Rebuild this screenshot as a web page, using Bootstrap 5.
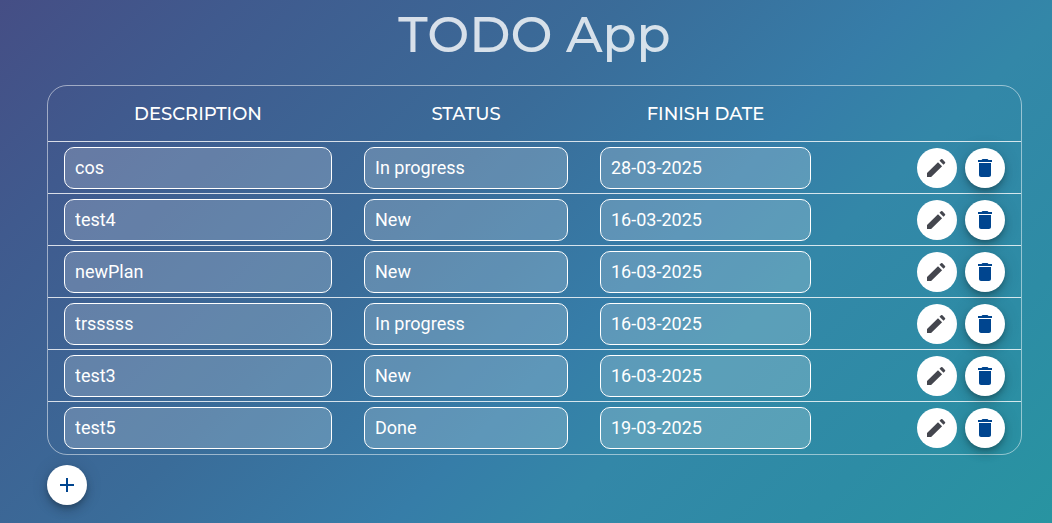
<!DOCTYPE html>
<html lang="en">
<head>
<meta charset="utf-8">
<meta name="viewport" content="width=device-width, initial-scale=1">
<title>TODO App</title>
<link href="https://cdn.jsdelivr.net/npm/bootstrap@5.3.0/dist/css/bootstrap.min.css" rel="stylesheet">
<style>
body { min-height: 100vh; font-family: Roboto, "Liberation Sans", sans-serif; background: linear-gradient(135deg, #454e85 0%, #405a8e 15%, #3a6c99 40%, #367da8 58%, #3387a8 68%, #2d8ca5 84%, #2894a1 100%) no-repeat; }
.page { padding: 8px 30px 18px 47px; }
.app-title { font: 500 50px/54px Montserrat, Inter, sans-serif; color: rgba(255,255,255,.8); margin-bottom: 23px; }
.plans { border: 1px solid rgba(255,255,255,.5); border-radius: 20px; }
.plans table { table-layout: fixed; border-collapse: separate; border-spacing: 0; }
.plans th { height: 56px; font: 500 18px/24px Montserrat, Inter, sans-serif; }
.plans td { height: 52px; padding: 5px 16px 4px; vertical-align: top; }
.plans th, .plans tbody tr:not(:last-child) td { border-bottom: 1px solid rgba(255,255,255,.8); }
.c-desc { width: 300px; } .c-status { width: 236px; } .c-date { width: 243px; }
@media (max-width: 991px) { .c-desc { width: 30%; } .c-status { width: 24%; } .c-date { width: 24%; } }
.plans .field { height: 42px; padding: 0 10px 2px; border: 1px solid #fff; border-radius: 10px; background: rgba(255,255,255,.2); color: #fff; font-size: 18px; }
.row-actions { height: 42px; }
.fab { width: 40px; height: 40px; border: 0; padding: 8px; border-radius: 50%; background: #fff; color: #00458f; display: block; }
.fab.raised { box-shadow: 0 3px 5px -1px rgba(0,0,0,.2), 0 6px 10px rgba(0,0,0,.14), 0 1px 18px rgba(0,0,0,.12); }
.fab.edit { color: #44464e; }
.fab.add { margin-top: 10px; }
.fab svg { display: block; width: 24px; height: 24px; fill: currentColor; }
</style>
</head>
<body>
<svg class="d-none" aria-hidden="true">
<symbol id="pen" viewBox="0 0 24 24"><path d="M2 17.100V21h4.100L17.100 10.300 13 6.200 2 17.100zM20 7.300a1 1 0 0 0 0-1.400l-2.600-2.600a1 1 0 0 0-1.400 0l-1.500 1.500 4 4L20 7.300z"/></symbol>
<symbol id="bin" viewBox="0 0 24 24"><path d="M6 19c0 1.100.9 2 2 2h8c1.100 0 2-.9 2-2V7H6v12zM19 4h-3.500l-1-1h-5l-1 1H5v2h14V4z"/></symbol>
<symbol id="plus" viewBox="0 0 24 24"><path d="M19 13h-6v6h-2v-6H5v-2h6V5h2v6h6v2z"/></symbol>
</svg>
<main class="page">
<h1 class="app-title text-center">TODO App</h1>
<div class="plans">
<table class="w-100 text-white">
<colgroup><col class="c-desc"><col class="c-status"><col class="c-date"><col></colgroup>
<thead><tr class="text-center"><th scope="col">DESCRIPTION</th><th scope="col">STATUS</th><th scope="col">FINISH DATE</th><th aria-label="Actions"></th></tr></thead>
<tbody id="rows"></tbody>
</table>
</div>
<button class="fab raised add" type="button" aria-label="Add plan"><svg><use href="#plus"/></svg></button>
</main>
<script src="https://cdn.jsdelivr.net/npm/bootstrap@5.3.0/dist/js/bootstrap.bundle.min.js"></script>
<script>
const plans = [
  ["cos", "In progress", "28-03-2025"],
  ["test4", "New", "16-03-2025"],
  ["newPlan", "New", "16-03-2025"],
  ["trsssss", "In progress", "16-03-2025"],
  ["test3", "New", "16-03-2025"],
  ["test5", "Done", "19-03-2025"]
];
const labels = ["Description", "Status", "Finish date"];
document.getElementById("rows").innerHTML = plans.map(p => `<tr>${p.map((v, i) =>
  `<td><input class="field w-100 d-block" type="text" readonly aria-label="${labels[i]}" value="${v}"></td>`).join("")}
  <td><div class="row-actions d-flex justify-content-end align-items-center gap-2">
    <button class="fab edit" type="button" aria-label="Edit"><svg><use href="#pen"/></svg></button>
    <button class="fab raised" type="button" aria-label="Delete"><svg><use href="#bin"/></svg></button>
  </div></td></tr>`).join("");
</script>
</body>
</html>
